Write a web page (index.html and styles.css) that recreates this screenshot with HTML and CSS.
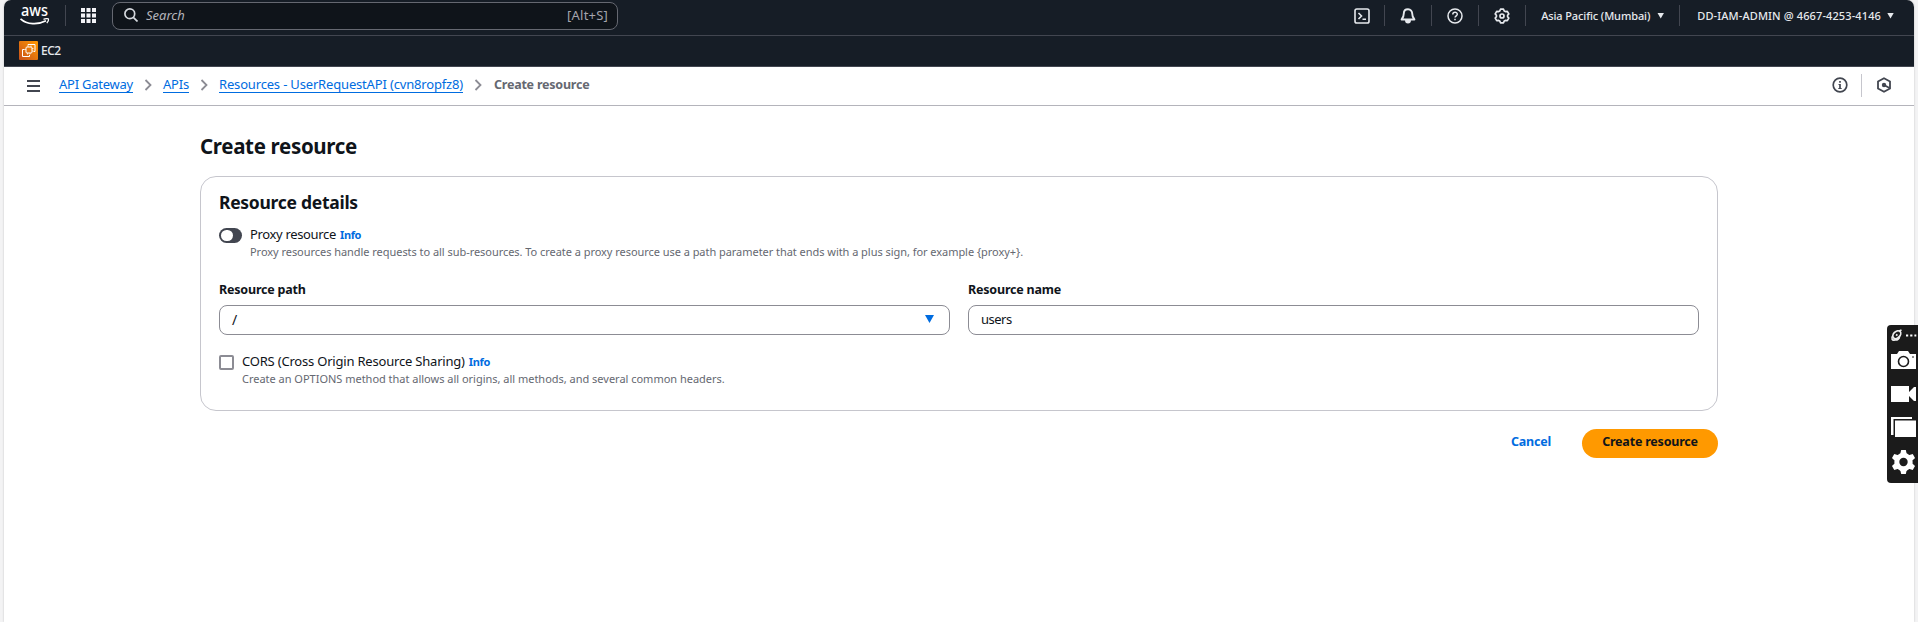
FILE: index.html
```html
<!DOCTYPE html>
<html lang="en">
<head>
<meta charset="utf-8">
<title>Create resource</title>
<link rel="stylesheet" href="styles.css">
</head>
<body>
<div class="window">
  <header class="topnav">
    <div class="navbar">
      <svg class="aws" viewBox="0 0 30 21" width="30" height="21"><text class="aws-word" x="1" y="11" textLength="27" lengthAdjust="spacingAndGlyphs">aws</text><path d="M.5 13.800C7 19.800 18 20 26 15.800" fill="none" stroke="#fff" stroke-width="1.700"/><path d="M23.500 14.300c2-.9 4.700-1 5-.3.200.8-.5 2.800-1.700 4.200" fill="none" stroke="#fff" stroke-width="1.300"/></svg>
      <i class="sep sep-logo"></i>
      <svg class="grid" viewBox="0 0 15 15" width="15" height="15" fill="#f3f3f7"><path d="M0 0h4v4H0zM5.500 0h4v4h-4zM11 0h4v4h-4zM0 5.500h4v4H0zM5.500 5.500h4v4h-4zM11 5.500h4v4h-4zM0 11h4v4H0zM5.500 11h4v4h-4zM11 11h4v4h-4z"/></svg>
      <div class="search">
        <svg viewBox="0 0 14 14" width="14" height="14" fill="none" stroke="#d5d9de" stroke-width="1.700"><circle cx="5.800" cy="5.800" r="4.900"/><path d="M9.300 9.300l4.200 4.200"/></svg>
        <span class="placeholder">Search</span><span class="key">[Alt+S]</span>
      </div>
      <div class="tools">
        <svg viewBox="0 0 16 16" width="16" height="16" fill="none" stroke="#e6e9ed" stroke-width="1.600"><rect x="1" y="1" width="14" height="14" rx="1.800"/><path d="M4.500 5l3 3-3 3M8.500 11.200h3.500"/></svg>
        <i class="sep"></i>
        <svg viewBox="0 0 16 16" width="16" height="16" fill="none" stroke="#e6e9ed" stroke-width="1.900" stroke-linejoin="round"><path d="M8 1.300c-2.700 0-4.200 2-4.200 4.300 0 3-.8 4.300-2.200 5.900h12.800c-1.400-1.600-2.200-2.900-2.200-5.900 0-2.300-1.500-4.300-4.200-4.300z"/><path d="M6 12.500c0 2.800 4 2.800 4 0z" fill="#e6e9ed"/></svg>
        <i class="sep"></i>
        <svg viewBox="0 0 16 16" width="16" height="16" fill="none" stroke="#e6e9ed" stroke-width="1.500"><circle cx="8" cy="8" r="7"/><path d="M5.800 6.400C5.800 3.500 10.300 3.600 10.300 6.200c0 1.600-2.300 1.600-2.300 3.400M8 10.700v1.500"/></svg>
        <i class="sep"></i>
        <svg viewBox="0 0 16 16" width="16" height="16" fill="none" stroke="#e6e9ed" stroke-width="1.700" stroke-linejoin="round"><path d="M6.500 1.200h3l.7 1.700 1.200.7 1.900-.3 1.500 2.600L13.600 7.300v1.400l1.200 1.400-1.500 2.600-1.900-.3-1.200.7-.7 1.700h-3l-.7-1.700-1.200-.7-1.900.3-1.500-2.600L2.400 8.700V7.300L1.200 5.900l1.500-2.600 1.900.3 1.200-.7z"/><circle cx="8" cy="8" r="2"/></svg>
        <i class="sep"></i>
        <span class="region">Asia Pacific (Mumbai)</span><i class="tri"></i>
        <i class="sep"></i>
        <span class="account">DD-IAM-ADMIN @ 4667-4253-4146</span><i class="tri"></i>
      </div>
    </div>
    <div class="favorites">
      <svg viewBox="0 0 19 19" width="19" height="19"><defs><linearGradient id="ec2" x1="0" y1="1" x2="1" y2="0"><stop offset="0" stop-color="#c8511b"/><stop offset="1" stop-color="#f90"/></linearGradient></defs><rect width="19" height="19" rx="1" fill="url(#ec2)"/><g fill="none" stroke="#fff"><rect x="7" y="6" width="6" height="6" rx="1"/><path d="M9 4.500v-1h7v7h-1.500M5.500 8.500h-2v7h7v-1.500"/><path stroke-width=".7" d="M7 8.500H5.500M8.500 12v1.500M11 12v1.500M13 7.500h1.500M9 6V4.500M12 6V4.500M13 10h1.500"/></g></svg>
      <span class="ec2">EC2</span>
    </div>
  </header>
  <div class="crumbbar">
    <svg class="menu" viewBox="0 0 13 12" width="13" height="12" stroke="#424650" stroke-width="1.800"><path d="M0 1h13M0 6h13M0 11h13"/></svg>
    <nav class="crumbs">
      <a class="crumb crumb-service">API Gateway</a>
      <svg class="chev" viewBox="0 0 8 12" width="8" height="12"><path d="M1.500 1l5 5-5 5"/></svg>
      <a class="crumb">APIs</a>
      <svg class="chev" viewBox="0 0 8 12" width="8" height="12"><path d="M1.500 1l5 5-5 5"/></svg>
      <a class="crumb crumb-api">Resources - UserRequestAPI (cvn8ropfz8)</a>
      <svg class="chev" viewBox="0 0 8 12" width="8" height="12"><path d="M1.500 1l5 5-5 5"/></svg>
      <b class="crumb current">Create resource</b>
    </nav>
    <svg viewBox="0 0 16 16" width="16" height="16" fill="none" stroke="#424650" stroke-width="1.700"><circle cx="8" cy="8" r="6.800"/><path d="M8 7v5M8 4v1.800"/><path stroke-width="1" d="M6.500 7.500H8M6.300 11.500h3.400"/></svg>
    <i class="sep light"></i>
    <svg viewBox="0 0 14 16" width="14" height="16" fill="none" stroke="#424650" stroke-width="1.800"><path d="M7 1.200l6 3.300v7L7 14.800l-6-3.300v-7z"/><path d="M7 8l5.500 3"/><circle cx="7" cy="8" r="2.200" fill="#424650" stroke="none"/></svg>
  </div>
  <main class="content">
    <h1>Create resource</h1>
    <section class="card">
      <h2>Resource details</h2>
      <div class="option">
        <i class="toggle"></i>
        <div>
          <div class="opt-title"><span class="proxy-title">Proxy resource</span><a class="info">Info</a></div>
          <div class="desc proxy-desc">Proxy resources handle requests to all sub-resources. To create a proxy resource use a path parameter that ends with a plus sign, for example {proxy+}.</div>
        </div>
      </div>
      <div class="fields">
        <div class="field"><label>Resource path</label><div class="input"><span class="path">/</span><i class="tri blue"></i></div></div>
        <div class="field"><label>Resource name</label><div class="input"><span class="name">users</span></div></div>
      </div>
      <div class="option">
        <i class="check"></i>
        <div>
          <div class="opt-title"><span class="cors-title">CORS (Cross Origin Resource Sharing)</span><a class="info">Info</a></div>
          <div class="desc cors-desc">Create an OPTIONS method that allows all origins, all methods, and several common headers.</div>
        </div>
      </div>
    </section>
    <div class="actions"><a class="cancel">Cancel</a><button class="primary">Create resource</button></div>
  </main>
</div>
<aside class="recorder">
  <svg viewBox="0 0 31 158" width="31" height="158"><g fill="none" stroke="#eee" stroke-width="1.700"><ellipse cx="9.800" cy="9.700" rx="4.600" ry="3.200" transform="rotate(-45 9.800 9.700)"/><path d="M6 10.500c-2.500 3-.5 5.500 2 4.200 2 .8 4.500-1 4.500-3.200M12 6l2.500-1M9 9.500l1.500 1"/></g><g fill="#fff"><path d="M19 9.500h2.200v2H19zM23.200 9.500h2.200v2h-2.200zM27.400 9.500h1.900v2h-1.900z"/><path d="M4 29h6l2-3h9l2 3h6v15H4zM4 61h18v6l5-5h2v14h-2l-5-5v6H4z"/><path d="M4 92h21v2H6.500v16H4zM8 95.500h21V112H8z"/></g><circle cx="16.500" cy="36.500" r="5" fill="none" stroke="#1b1b1b" stroke-width="1.600"/><path d="M25 32h2" stroke="#1b1b1b"/><g transform="translate(16.500 137)"><circle r="6.700" fill="none" stroke="#fff" stroke-width="5"/><g fill="#fff"><path id="tooth" d="M-2.300-12h4.600l1.200 5h-7z"/><use href="#tooth" transform="rotate(60)"/><use href="#tooth" transform="rotate(120)"/><use href="#tooth" transform="rotate(180)"/><use href="#tooth" transform="rotate(240)"/><use href="#tooth" transform="rotate(300)"/></g></g></svg>
</aside>
</body>
</html>
```
FILE: styles.css
```css
* { box-sizing: border-box; }
body { margin: 0; height: 622px; overflow: hidden; background: #f3f3f4; font-family: "Noto Sans", "Open Sans", sans-serif; font-size: 13px; color: #0f141a; }
.window { width: 1910px; height: 622px; margin-left: 4px; background: #fff; box-shadow: 0 0 2px #bbb; border-radius: 7px 7px 0 0; overflow: hidden; }
svg { display: block; flex: none; }

/* Top navigation */
.topnav { height: 67px; background: #161d26; color: #e6e9ed; border-bottom: 1px solid #424650; }
.navbar { height: 36px; border-bottom: 1px solid #424650; display: flex; align-items: center; padding: 0 18px 4px 16px; }
.aws { overflow: visible; }
.aws-word { font: 500 16px "Noto Sans", sans-serif; fill: #fff; }
.sep { width: 1px; height: 21px; background: #424650; flex: none; }
.sep-logo { margin: 0 15px; }
.search { width: 506px; height: 28px; margin-left: 16px; background: #0f141a; border: 1px solid #656871; border-radius: 8px; display: flex; align-items: center; padding: 0 9px 1px 11px; }
.placeholder { font-style: italic; margin-left: 8px; color: #b4b4bb; }
.key { margin-left: auto; color: #a4a4ad; letter-spacing: 0.2px; }
.tools { margin-left: auto; display: flex; align-items: center; font-size: 11px; line-height: 16px; font-weight: 500; padding-right: 2px; }
.tools .sep { margin: 0 15px; }
.tools svg:first-child { margin-right: -1px; }
.tri { width: 7px; height: 6px; background: #e6e9ed; clip-path: polygon(0 0, 100% 0, 50% 100%); flex: none; }
.region { letter-spacing: -0.12px; margin-right: 7px; }
.account { letter-spacing: 0.12px; margin: 0 6px 0 2px; }
.favorites { display: flex; align-items: center; height: 29px; padding-left: 15px; }
.ec2 { margin-left: 3px; font-size: 12px; letter-spacing: -0.5px; padding-bottom: 1px; font-weight: 500; }

/* Breadcrumbs */
.crumbbar { height: 39px; border-bottom: 1px solid #b4b4bb; display: flex; align-items: center; padding: 0 23px 2px 23px; }
.menu { margin-top: 1px; }
.crumbs { display: flex; align-items: center; margin-left: 19px; flex: 1; }
.crumb { color: #006ce0; border-bottom: 1px solid #006ce0; line-height: 16px; margin-bottom: 1px; letter-spacing: -0.2px; }
.crumb-service { letter-spacing: -0.24px; }
.crumb-api { letter-spacing: -0.17px; }
.current { color: #656871; border: 0; margin-bottom: 0; font-size: 12.5px; letter-spacing: -0.22px; margin-left: 1px; }
.chev { margin: 0 11px; fill: none; stroke: #8c8c94; stroke-width: 1.8; }
.sep.light { height: 23px; background: #c6c6cd; margin: 0 15px 0 13px; }

/* Form */
.content { width: 1518px; margin-left: 196px; }
h1 { margin: 26px 0 15px; font-size: 20.5px; line-height: 29px; letter-spacing: -0.33px; }
h2 { margin: 0 0 11px; font-size: 17.5px; line-height: 22px; letter-spacing: -0.28px; }
.card { height: 235px; border: 1px solid #c6c6cd; border-radius: 16px; padding: 14px 18px; }
.option { display: flex; }
.opt-title { line-height: 20px; height: 20px; }
.proxy-title { letter-spacing: -0.34px; }
.cors-title { letter-spacing: -0.2px; }
.info { font-size: 11px; font-weight: 700; color: #006ce0; margin-left: 4px; letter-spacing: -0.35px; }
.desc { font-size: 11px; line-height: 16px; color: #656871; }
.proxy-desc { letter-spacing: -0.044px; }
.cors-desc { letter-spacing: -0.015px; }
.toggle { width: 23px; height: 15px; border-radius: 8px; background: #424650; margin: 4px 8px 0 0; padding: 2px; }
.toggle::before { content: ""; display: block; width: 12px; height: 11px; border-radius: 6px; background: #fff; }
.check { width: 15px; height: 15px; border: 2px solid #8c8c94; border-radius: 2px; margin: 4px 8px 0 0; }
.fields { display: grid; grid-template-columns: 1fr 1fr; gap: 18px; margin: 20px 0 16px; }
label { display: block; font-size: 12.5px; font-weight: 700; line-height: 20px; letter-spacing: -0.2px; margin-bottom: 5px; }
.input { height: 30px; border: 1px solid #8c8c94; border-radius: 8px; display: flex; align-items: center; padding: 0 15px 2px 12px; }
.path { font-size: 14px; }
.name { letter-spacing: -0.5px; }
.blue { width: 9px; height: 8px; background: #006ce0; margin-left: auto; }
.actions { display: flex; justify-content: flex-end; align-items: center; margin-top: 18px; font-size: 12.5px; font-weight: 700; letter-spacing: -0.2px; }
.cancel { color: #006ce0; margin-right: 31px; padding-bottom: 4px; }
.primary { border: 0; background: #f90; color: #0f141a; width: 136px; height: 29px; border-radius: 15px; font: inherit; letter-spacing: inherit; padding: 0 0 4px; }

/* Screen recorder dock, floating over the page edge */
.recorder { position: absolute; right: 0; top: 325px; width: 31px; height: 158px; background: #1b1b1b; border-radius: 4px 0 0 4px; }
```
